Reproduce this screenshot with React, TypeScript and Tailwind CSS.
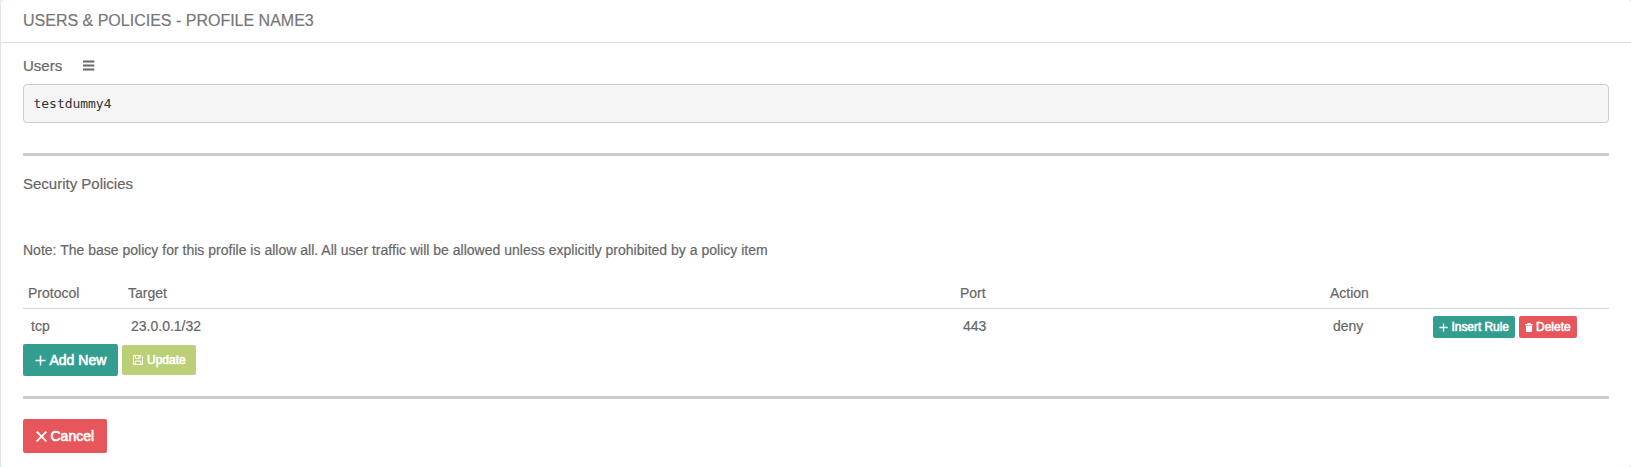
import React from "react";

function Plus({ className }: { className: string }) {
  return (
    <svg viewBox="0 0 12 12" className={className} fill="none" stroke="currentColor" strokeWidth="1.7">
      <path d="M6 0.5V11.5M0.5 6H11.5" />
    </svg>
  );
}

function Trash() {
  return (
    <svg viewBox="0 0 8 9" className="h-[9px] w-2 shrink-0" fill="currentColor">
      <path d="M0.3 1H2.4V0H5.6V1H7.7V2.2H0.3ZM0.8 2.8H7.2L6.9 9H1.1Z" />
    </svg>
  );
}

function Floppy() {
  return (
    <svg viewBox="0 0 10 10" className="h-[10px] w-[10px] shrink-0" fill="none" stroke="currentColor" strokeWidth="1">
      <path d="M0.5 0.5H8L9.5 2V9.5H0.5Z" />
      <path d="M2.5 0.5V3.5H7V0.5M2.2 9.5V6H7.8V9.5M5.7 1V2.7" />
    </svg>
  );
}

function Cross() {
  return (
    <svg viewBox="0 0 11 11" className="h-[11px] w-[11px] shrink-0" fill="none" stroke="currentColor" strokeWidth="1.9">
      <path d="M0.6 0.6L10.4 10.4M10.4 0.6L0.6 10.4" />
    </svg>
  );
}

function Bars() {
  return (
    <svg viewBox="0 0 12 11" className="mb-[2px] h-[11px] w-3 shrink-0" fill="currentColor">
      <path d="M0 0.5H11.3V2.4H0ZM0 4.5H11.3V6.4H0ZM0 8.5H11.3V10.4H0Z" />
    </svg>
  );
}

const COLUMNS = "grid grid-cols-[100px_832px_370px_100px_1fr]";

export default function App() {
  return (
    <div className="h-[467px] w-full bg-[#e6ebeb] font-['Liberation_Sans',Arial,sans-serif] text-[14px] text-[#676767] [-webkit-text-stroke:0.2px]">
      <section className="flex h-full flex-col rounded-[4px] border-l border-[#dfe5e5] bg-white">
        <header className="flex h-[43px] shrink-0 items-center border-b border-[#dddddd] pl-[22px] text-[#777777]">
          <h1 className="whitespace-nowrap text-[16px] leading-[20px]">USERS &amp; POLICIES - PROFILE NAME3</h1>
        </header>

        <div className="flex flex-col pl-[22px] pr-[22px]">
          <div className="flex h-[41px] items-center gap-[21px] pt-[5px]">
            <h2 className="text-[15px] leading-5">Users</h2>
            <Bars />
          </div>
          <pre className="h-[39px] rounded-[4px] border border-[#cccccc] bg-[#f5f5f5] pl-[9.5px] font-['DejaVu_Sans_Mono',monospace] text-[13px] leading-[37px] tracking-[-0.03px] text-[#333333] [-webkit-text-stroke:0px]">testdummy4</pre>
          <div className="mt-[30px] h-[3px] bg-[#cccccc]" />

          <h2 className="mt-[18px] text-[15px] leading-5">Security Policies</h2>
          <p className="mt-[46px] whitespace-nowrap leading-5 tracking-[0.01px]">
            Note: The base policy for this profile is allow all. All user traffic will be allowed unless explicitly prohibited by a policy item
          </p>

          <div className={`${COLUMNS} mt-[23px] h-[26px] border-b border-[#d5d5d5] pl-[5px] leading-5`}>
            <span>Protocol</span>
            <span>Target</span>
            <span>Port</span>
            <span>Action</span>
          </div>
          <div className={`${COLUMNS} h-[35px] pl-2 pt-[7px] leading-5`}>
            <span>tcp</span>
            <span>23.0.0.1/32</span>
            <span>443</span>
            <span>deny</span>
            <div className="flex gap-1 text-white [-webkit-text-stroke:0.55px]">
              <button className="flex h-[22px] w-[82px] items-center gap-[3.5px] rounded-[2px] bg-[#339e90] pl-[6px] text-[12px]">
                <Plus className="h-[9px] w-[9px] shrink-0" />
                <span className="whitespace-nowrap tracking-[-0.05px]">Insert Rule</span>
              </button>
              <button className="flex h-[22px] w-[58px] items-center gap-[3px] rounded-[2px] bg-[#e6565a] pl-[6px] text-[12px]">
                <Trash />
                <span>Delete</span>
              </button>
            </div>
          </div>

          <div className="flex items-center gap-1 text-white [-webkit-text-stroke:0.6px]">
            <button className="flex h-8 w-[95px] items-center gap-[4px] rounded-[2px] bg-[#339e90] pl-[11.5px]">
              <Plus className="h-[11px] w-[11px] shrink-0" />
              <span className="whitespace-nowrap">Add New</span>
            </button>
            <button className="flex h-[30px] w-[74px] items-center gap-1 rounded-[2px] bg-[#bbd076] pl-[11px] text-[12px]">
              <Floppy />
              <span>Update</span>
            </button>
          </div>

          <div className="mt-5 h-[3px] bg-[#cccccc]" />

          <button className="mt-5 flex h-[34px] w-[84px] items-center gap-[4px] rounded-[2px] bg-[#e6565a] pl-[12.5px] text-white [-webkit-text-stroke:0.6px]">
            <Cross />
            <span>Cancel</span>
          </button>
        </div>
      </section>
    </div>
  );
}
